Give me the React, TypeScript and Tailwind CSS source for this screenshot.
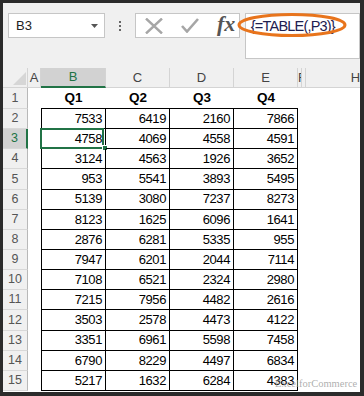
import React from 'react';

const rows: number[][] = [
  [7533, 6419, 2160, 7866],
  [4758, 4069, 4558, 4591],
  [3124, 4563, 1926, 3652],
  [953, 5541, 3893, 5495],
  [5139, 3080, 7237, 8273],
  [8123, 1625, 6096, 1641],
  [2876, 6281, 5335, 955],
  [7947, 6201, 2044, 7114],
  [7108, 6521, 2324, 2980],
  [7215, 7956, 4482, 2616],
  [3503, 2578, 4473, 4122],
  [3351, 6961, 5598, 7458],
  [6790, 8229, 4497, 6834],
  [5217, 1632, 6284, 4383],
];

const font = { fontFamily: '"Liberation Sans", Arial, sans-serif' };

function Toolbar() {
  return (
    <div className="h-[65px] shrink-0 flex items-start pt-[10px] pl-[5px] relative">
      {/* name box */}
      <div className="w-[101px] h-[25px] bg-white border border-[#c6c6c6] flex items-center pl-[7px] pr-[6px] justify-between">
        <span className="text-[13px] text-[#222]">B3</span>
        <svg width="7" height="4" viewBox="0 0 7 4">
          <path d="M0 0 L7 0 L3.5 4 Z" fill="#555" />
        </svg>
      </div>
      <div className="w-[31px] h-[25px] flex flex-col items-center justify-center gap-[2px]">
        <div className="w-[2px] h-[2px] bg-[#666]" />
        <div className="w-[2px] h-[2px] bg-[#666]" />
        <div className="w-[2px] h-[2px] bg-[#666]" />
      </div>
      {/* cancel / enter / fx */}
      <div className="w-[109px] h-[25px] bg-white border border-[#c6c6c6] flex items-center pl-[9px] gap-[18px]">
        <svg width="18" height="16" viewBox="0 0 18 16">
          <path d="M1 0.5 L17 15.5 M17 0.5 L1 15.5" stroke="#a6a6a6" strokeWidth="2.4" fill="none" />
        </svg>
        <svg width="18" height="15" viewBox="0 0 18 15">
          <path d="M1 8 L6 13.5 L17 1" stroke="#a6a6a6" strokeWidth="2.6" fill="none" />
        </svg>
        <span
          className="text-[22px] italic text-[#555] leading-none -mt-[3px] font-bold"
          style={{ fontFamily: '"Liberation Serif", "Times New Roman", serif' }}
        >
          fx
        </span>
      </div>
      {/* formula */}
      <div className="ml-[5px] w-[120px] h-[46px] bg-white border border-[#c6c6c6] pl-[5px] pt-[5px] relative">
        <span className="block text-[14.5px] leading-none text-[#1e2050] tracking-[-0.8px]">{'{=TABLE(,P3)}'}</span>
        <svg className="absolute left-[-9px] top-[-1px]" width="112" height="26" viewBox="0 0 112 26">
          <ellipse cx="55" cy="12" rx="53" ry="10.5" stroke="#e8741c" strokeWidth="3" fill="none" />
        </svg>
      </div>
    </div>
  );
}

function HeaderRow() {
  const hdr = 'h-[20px] shrink-0 flex items-center justify-center border-r border-[#d4d4d4] border-b border-[#b8b8b8] bg-[#f0f0f0] text-[13px] text-[#444]';
  return (
    <div className="flex h-[20px] shrink-0">
      <div className={`${hdr} w-[25px] relative`}>
        <svg className="absolute left-[10px] top-[4px]" width="13" height="13" viewBox="0 0 13 13">
          <path d="M13 0 L13 13 L0 13 Z" fill="#d6d6d6" />
        </svg>
      </div>
      <div className={`${hdr} w-[13px]`}>A</div>
      <div className="h-[20px] w-[65px] shrink-0 flex items-center justify-center border-r border-[#d4d4d4] border-b-2 border-b-[#217346] bg-[#d2d2d2] text-[13px] text-[#217346]">B</div>
      <div className={`${hdr} w-[64px]`}>C</div>
      <div className={`${hdr} w-[64px]`}>D</div>
      <div className={`${hdr} w-[64px]`}>E</div>
      <div className={`${hdr} w-[4px] overflow-hidden !justify-start`}>F</div>
      <div className={`${hdr} w-[4px]`} />
      <div className={`${hdr} w-[100px]`}>H</div>
    </div>
  );
}

function RowHead({ n, active }: { n: number; active?: boolean }) {
  if (active) {
    return (
      <div className="w-[25px] h-full shrink-0 flex items-center justify-center bg-[#d2d2d2] border-r-2 border-r-[#217346] border-b border-b-[#d8d8d8] text-[12.5px] text-[#217346]">
        {n}
      </div>
    );
  }
  return (
    <div className="w-[25px] h-full shrink-0 flex items-center justify-center bg-[#f0f0f0] border-r border-r-[#b8b8b8] border-b border-b-[#d8d8d8] text-[12.5px] text-[#555]">
      {n}
    </div>
  );
}

export default function App() {
  return (
    <div className="w-[364px] h-[396px] bg-[#2b2b2b] pt-[3px] pl-[3px] pr-[4px] pb-[4px]" style={font}>
      <div className="w-full h-full bg-[#f0f0f0] flex flex-col overflow-hidden relative">
        <Toolbar />
        <HeaderRow />
        <div className="flex flex-col bg-white flex-1">
          {/* row 1 : quarter headings */}
          <div className="flex h-[21px] shrink-0">
            <RowHead n={1} />
            <div className="w-[13px] shrink-0" />
            {['Q1', 'Q2', 'Q3', 'Q4'].map((q, i) => (
              <div
                key={q}
                className={`${i === 0 ? 'w-[65px]' : 'w-[64px]'} shrink-0 h-full flex items-center justify-center border-b border-black font-bold text-[13.5px] text-black`}
              >
                {q}
              </div>
            ))}
          </div>
          {rows.map((r, ri) => (
            <div key={ri} className="flex h-[20.15px] shrink-0">
              <RowHead n={ri + 2} active={ri === 1} />
              <div className="w-[13px] shrink-0" />
              {r.map((v, ci) => (
                <div
                  key={ci}
                  className={`${ci === 0 ? 'w-[65px] border-l' : 'w-[64px]'} shrink-0 h-full relative flex items-center justify-end pr-[3px] border-r border-b border-black text-[13px] tracking-[-0.4px] text-black`}
                >
                  {v}
                  {ri === 1 && ci === 0 && (
                    <>
                      <div className="absolute left-[-2px] top-[-1px] right-[1px] bottom-[-1px] border-2 border-[#217346]" />
                      <div className="absolute right-[-3px] bottom-[-3px] w-[6px] h-[6px] bg-[#217346] border border-white" />
                    </>
                  )}
                </div>
              ))}
            </div>
          ))}
        </div>
        <div
          className="absolute left-[272px] top-[373px] text-[10.5px] text-[#9a9a9a]/80"
          style={{ fontFamily: '"Liberation Serif", serif' }}
        >
          ExcelforCommerce
        </div>
      </div>
    </div>
  );
}
